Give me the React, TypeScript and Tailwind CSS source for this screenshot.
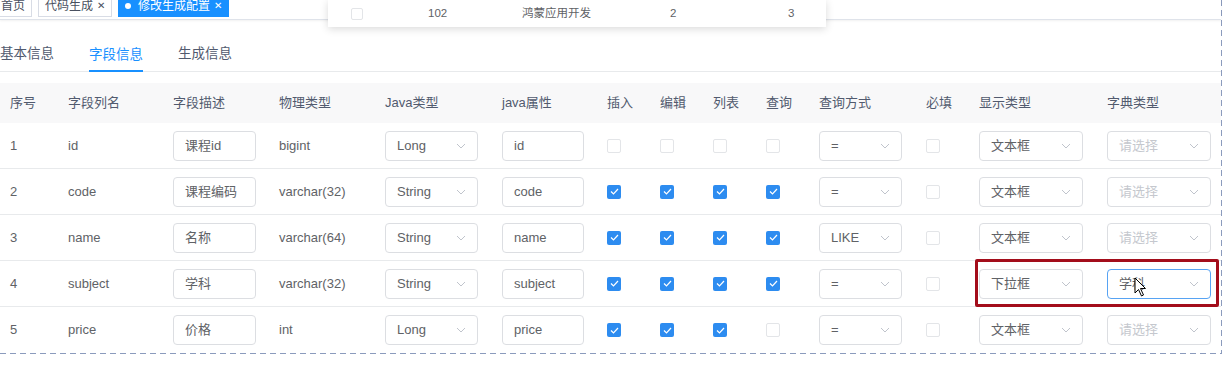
import React from 'react';

type Row = {
  no: number;
  col: string;
  desc: string;
  phys: string;
  javaType: string;
  javaProp: string;
  ins: boolean;
  edit: boolean;
  list: boolean;
  query: boolean;
  queryType: string;
  display: string;
  dict?: string;
};

const rows: Row[] = [
  { no: 1, col: 'id', desc: '课程id', phys: 'bigint', javaType: 'Long', javaProp: 'id', ins: false, edit: false, list: false, query: false, queryType: '=', display: '文本框' },
  { no: 2, col: 'code', desc: '课程编码', phys: 'varchar(32)', javaType: 'String', javaProp: 'code', ins: true, edit: true, list: true, query: true, queryType: '=', display: '文本框' },
  { no: 3, col: 'name', desc: '名称', phys: 'varchar(64)', javaType: 'String', javaProp: 'name', ins: true, edit: true, list: true, query: true, queryType: 'LIKE', display: '文本框' },
  { no: 4, col: 'subject', desc: '学科', phys: 'varchar(32)', javaType: 'String', javaProp: 'subject', ins: true, edit: true, list: true, query: true, queryType: '=', display: '下拉框', dict: '学科' },
  { no: 5, col: 'price', desc: '价格', phys: 'int', javaType: 'Long', javaProp: 'price', ins: true, edit: true, list: true, query: false, queryType: '=', display: '文本框' },
];

const headers = ['序号', '字段列名', '字段描述', '物理类型', 'Java类型', 'java属性', '插入', '编辑', '列表', '查询', '查询方式', '必填', '显示类型', '字典类型'];

const gridCols = 'grid grid-cols-[58px_105px_106px_106px_117px_105px_53px_53px_53px_53px_107px_53px_128px_1fr]';

const Chevron = () => (
  <svg width="10" height="6" viewBox="0 0 10 6" fill="none" className="shrink-0">
    <polyline points="1,1 5,5 9,1" stroke="#c0c4cc" strokeWidth="1" />
  </svg>
);

const Select = ({ value, width, placeholder, focused }: { value?: string; width: string; placeholder?: string; focused?: boolean }) => (
  <div
    className={`${width} h-[30px] flex items-center justify-between pl-[11px] pr-[11px] rounded-[4px] border bg-white ${
      focused ? 'border-[#57a3f3]' : 'border-[#dcdee2]'
    }`}
  >
    {value ? <span className="text-[#606266]">{value}</span> : <span className="text-[#c5c8ce]">{placeholder}</span>}
    <Chevron />
  </div>
);

const Input = ({ value, width }: { value: string; width: string }) => (
  <div className={`${width} h-[30px] flex items-center px-[11px] rounded-[4px] border border-[#dcdee2] bg-white text-[#606266]`}>
    {value}
  </div>
);

const Checkbox = ({ checked }: { checked: boolean }) =>
  checked ? (
    <div className="w-[14px] h-[14px] rounded-[2px] bg-[#2d8cf0] flex items-center justify-center">
      <svg width="9" height="7" viewBox="0 0 9 7" fill="none">
        <polyline points="1,3.5 3.5,6 8,1" stroke="#fff" strokeWidth="1.2" />
      </svg>
    </div>
  ) : (
    <div className="w-[14px] h-[14px] rounded-[2px] border border-[#e3e5e8] bg-white" />
  );

const Tag = ({ label, closable, active }: { label: string; closable?: boolean; active?: boolean }) => (
  <div
    className={`h-[22px] flex items-center gap-[4px] px-[6px] border text-[12px] ${
      active ? 'bg-[#1890ff] border-[#1890ff] text-white' : 'bg-white border-[#d8dce5] text-[#495060]'
    }`}
  >
    {active && <span className="w-[6px] h-[6px] rounded-full bg-white mr-[3px]" />}
    <span>{label}</span>
    {closable && <span className="text-[10px] leading-none">✕</span>}
  </div>
);

export default function App() {
  return (
    <div className="relative w-[1228px] h-[365px] bg-white overflow-hidden font-['Liberation_Sans','Noto_Sans_CJK_SC',sans-serif] text-[13px] text-[#606266]">
      <div className="w-[1222px] pr-px pb-px [background:repeating-linear-gradient(90deg,#8b9bbd_0_6px,transparent_6px_10px)_left_bottom/100%_1px_no-repeat,repeating-linear-gradient(180deg,#8b9bbd_0_6px,transparent_6px_10px)_right_top/1px_100%_no-repeat]">
        {/* Tags */}
        <div className="h-[20px] border-b border-[#dfe3ea] shadow-[0_1px_2px_rgba(0,0,0,0.06)] overflow-hidden">
          <div className="flex items-start gap-[6px] -mt-[5px] -ml-[6px]">
            <Tag label="首页" />
            <Tag label="代码生成" closable />
            <Tag label="修改生成配置" closable active />
          </div>
        </div>

        {/* Tabs */}
        <div className="h-[52px] flex items-end gap-[35px] border-b border-[#e8eaec] text-[13.5px]">
          <div className="pb-[7px] text-[#515a6e]">基本信息</div>
          <div className="pb-[5px] -mb-px border-b-2 border-[#1890ff] text-[#1890ff]">字段信息</div>
          <div className="pb-[7px] text-[#515a6e]">生成信息</div>
        </div>

        {/* Table */}
        <div className="mt-[11px]">
          <div className={`${gridCols} h-[40px] items-center bg-[#f8f8f9] text-[#515a6e]`}>
            {headers.map((h) => (
              <div key={h} className="px-[10px] whitespace-nowrap">
                {h}
              </div>
            ))}
          </div>
          {rows.map((r, i) => (
            <div
              key={r.no}
              className={`${gridCols} h-[46px] items-center ${i < rows.length - 1 ? 'border-b border-[#e8eaec]' : ''}`}
            >
              <div className="px-[10px]">{r.no}</div>
              <div className="px-[10px]">{r.col}</div>
              <div className="px-[10px]">
                <Input value={r.desc} width="w-[83px]" />
              </div>
              <div className="px-[10px]">{r.phys}</div>
              <div className="px-[10px]">
                <Select value={r.javaType} width="w-[93px]" />
              </div>
              <div className="px-[10px]">
                <Input value={r.javaProp} width="w-[82px]" />
              </div>
              <div className="px-[10px]">
                <Checkbox checked={r.ins} />
              </div>
              <div className="px-[10px]">
                <Checkbox checked={r.edit} />
              </div>
              <div className="px-[10px]">
                <Checkbox checked={r.list} />
              </div>
              <div className="px-[10px]">
                <Checkbox checked={r.query} />
              </div>
              <div className="px-[10px]">
                <Select value={r.queryType} width="w-[83px]" />
              </div>
              <div className="px-[10px]">
                <Checkbox checked={false} />
              </div>
              <div className="px-[10px]">
                <Select value={r.display} width="w-[104px]" />
              </div>
              <div className="px-[10px]">
                <Select value={r.dict} placeholder="请选择" width="w-[104px]" focused={!!r.dict} />
              </div>
            </div>
          ))}
        </div>
      </div>

      {/* Dropdown popup peeking from above */}
      <div className="absolute left-[328px] top-0 w-[498px] h-[27px] bg-white shadow-[0_2px_8px_rgba(0,0,0,0.15)] grid grid-cols-[100px_94px_148px_118px_1fr] items-center text-[11.5px] text-[#606266]">
        <div className="pl-[23px]">
          <div className="w-[12px] h-[12px] rounded-[2px] border border-[#e3e5e8]" />
        </div>
        <div>102</div>
        <div>鸿蒙应用开发</div>
        <div>2</div>
        <div>3</div>
      </div>

      {/* Annotation box */}
      <div className="absolute left-[975px] top-[259px] w-[244px] h-[48px] border-[3px] border-[#a30d1b] rounded-[2px]" />

      {/* Mouse cursor */}
      <svg className="absolute left-[1134px] top-[277px]" width="13" height="21" viewBox="0 0 13 21">
        <path d="M1 1 L1 16 L4.5 12.5 L7.5 19 L9.5 18 L6.5 11.5 L11.5 11.5 Z" fill="#fff" stroke="#000" strokeWidth="1" strokeLinejoin="round" />
      </svg>
    </div>
  );
}
